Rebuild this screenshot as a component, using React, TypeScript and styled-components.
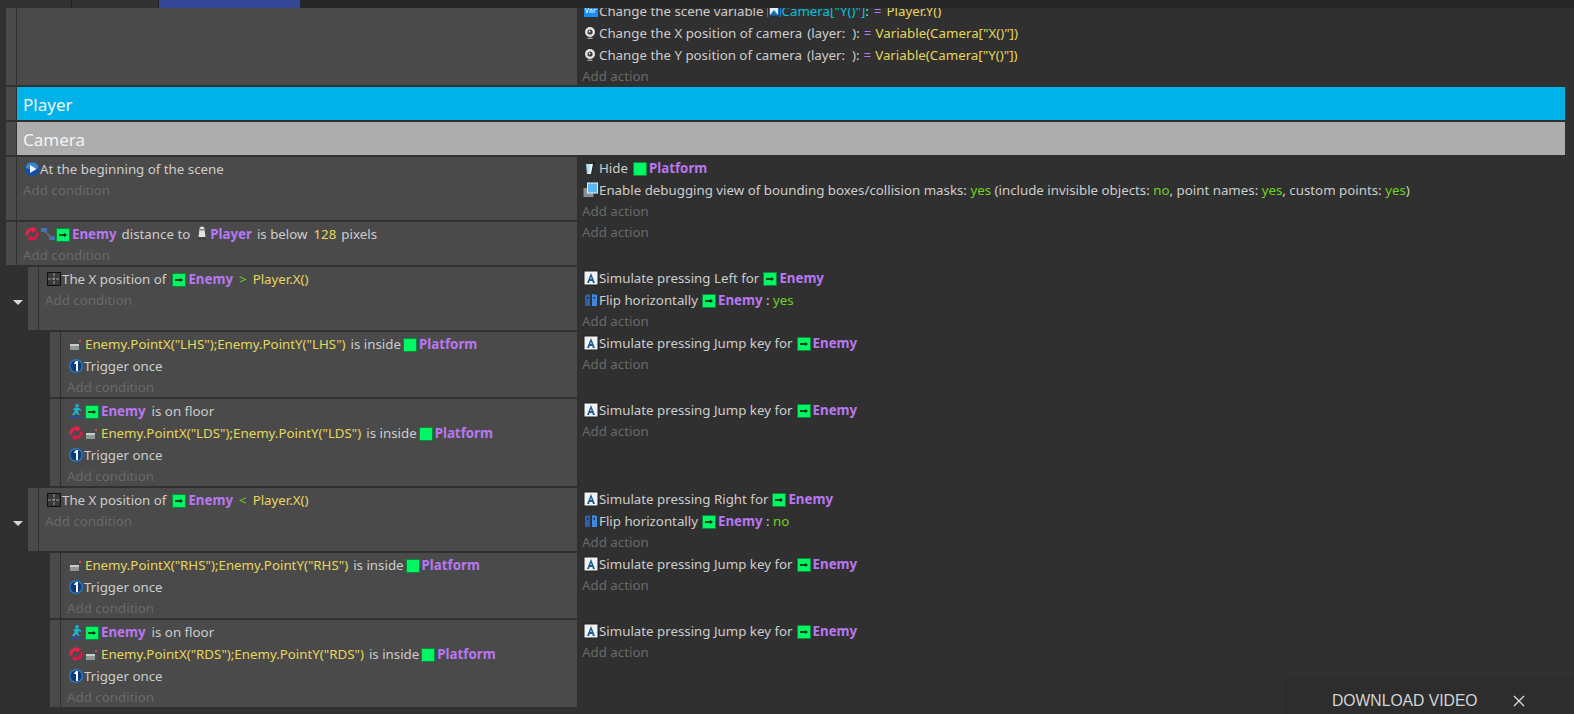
import React from "react";
import styled, { createGlobalStyle } from "styled-components";

const Global = createGlobalStyle`
  html, body { margin: 0; padding: 0; background: #303030; }
  #root { width: 1574px; height: 714px; overflow: hidden; }
`;

const Page = styled.div`
  position: relative;
  width: 1574px;
  height: 714px;
  overflow: hidden;
  background: #303030;
  font-family: "Noto Sans", "Open Sans", sans-serif;
  font-size: 13.3px;
  color: #cdcdcd;
`;

const TopBar = styled.div`
  position: relative;
  z-index: 1;
  display: flex;
  height: 8px;
  background: #262626;
`;
const TopTab = styled.div<{ $w: number }>`
  width: ${(p) => p.$w}px;
  background: #323232;
  border-right: 1px solid #232323;
  box-sizing: border-box;
`;
const ActiveTab = styled.div`
  width: 141px;
  background: #344696;
`;

const List = styled.div`
  display: flex;
  flex-direction: column;
  gap: 2px;
`;

const Line = styled.div`
  flex: 0 0 22px;
  height: 22px;
  box-sizing: border-box;
  padding: 1px 0 0 1px;
  line-height: 21px;
  white-space: pre;
`;
const AddLine = styled.div`
  flex: 0 0 21px;
  height: 21px;
  box-sizing: border-box;
  padding-top: 1px;
  line-height: 20px;
  color: #696969;
`;

const Row = styled.div<{ $indent: number; $h: number }>`
  position: relative;
  display: flex;
  height: ${(p) => p.$h}px;
  padding-left: ${(p) => 6 + p.$indent}px;
`;
const Handle = styled.div`
  flex: 0 0 10px;
  margin-right: 1px;
  background: #4a4a4a;
`;
const Conditions = styled.div<{ $indent: number }>`
  flex: 0 0 ${(p) => 560 - p.$indent}px;
  box-sizing: border-box;
  padding-left: 6px;
  background: #4a4a4a;
  overflow: hidden;
  ${Line} {
    padding-top: 2px;
  }
`;
const Actions = styled.div<{ $end?: boolean }>`
  flex: 1;
  padding-left: 5px;
  display: flex;
  flex-direction: column;
  justify-content: ${(p) => (p.$end ? "flex-end" : "flex-start")};
  margin-bottom: ${(p) => (p.$end ? "-2px" : "0")};
  min-height: 0;
  ${AddLine} {
    padding-top: 0;
  }
`;
const Obj = styled.b`
  color: #b877f2;
  font-weight: 700;
`;
const Expr = styled.span`
  color: #e6d75c;
`;
const Yes = styled.span`
  color: #6fd321;
`;
const Cyan = styled.span`
  color: #00c4dc;
`;
const Op = styled.span`
  color: #b877f2;
`;
const Gap = styled.span<{ $w?: number }>`
  display: inline-block;
  width: ${(p) => p.$w ?? 6}px;
`;

const GroupRow = styled.div`
  display: flex;
  height: 33px;
  padding: 0 9px 0 6px;
`;
const GroupBar = styled.div<{ $bg: string }>`
  flex: 1;
  padding-left: 6px;
  background: ${(p) => p.$bg};
  color: #f4f4f4;
  font-size: 17px;
  line-height: 35px;
`;

const Toggle = styled.div`
  position: absolute;
  left: 13px;
  top: 33px;
  width: 0;
  height: 0;
  border-left: 5px solid transparent;
  border-right: 5px solid transparent;
  border-top: 5px solid #d8d8d8;
`;

const Toast = styled.div`
  position: absolute;
  right: 0;
  bottom: 0;
  width: 291px;
  height: 36px;
  box-sizing: border-box;
  background: #2d2d2d;
  display: flex;
  align-items: center;
  padding: 9px 0 0 49px;
  font-family: "Liberation Sans", Arial, sans-serif;
  font-size: 15.7px;
  color: #d4d4d4;
`;
const ToastClose = styled.svg`
  width: 12px;
  height: 12px;
  margin-left: 35px;
`;

const Ico = styled.svg`
  display: inline-block;
  vertical-align: -3px;
  width: 16px;
  height: 16px;
`;

const SceneIcon = () => (
  <Ico viewBox="0 0 16 16">
    <circle cx="8" cy="8" r="7" fill="#0f4fa6" />
    <path d="M1.500 7a6.600 6.600 0 0 1 13 0c-2 1.500-11 1.500-13 0z" fill="#5aa8ea" opacity=".6" />
    <path d="M6 4l6.500 4L6 12z" fill="#f2f6fb" />
  </Ico>
);
const InvertIcon = () => (
  <Ico viewBox="0 0 16 16">
    <path d="M3 9.500A5 5 0 0 1 9.500 3.500" fill="none" stroke="#e8204c" strokeWidth="3" />
    <path d="M8 0.500l5 3-5 3.500z" fill="#e8204c" />
    <path d="M13 6.500A5 5 0 0 1 6.500 12.500" fill="none" stroke="#d81a44" strokeWidth="3" />
    <path d="M8 9l-5 3.500 5 3z" fill="#d81a44" />
  </Ico>
);
const DistanceIcon = () => (
  <Ico viewBox="0 0 16 16">
    <path d="M4 5l8 7" stroke="#8a8a8a" strokeWidth="1" />
    <rect x="1" y="2" width="6" height="4" fill="#4a70b0" />
    <rect x="9" y="10" width="6" height="4" fill="#4a70b0" />
  </Ico>
);
const GreenBox = styled.svg`
  display: inline-block;
  vertical-align: -3px;
  width: 14px;
  height: 14px;
  margin-right: 2px;
  background: #00f763;
  border: 1px solid #0b8a3e;
  box-sizing: border-box;
`;
const EnemyBox = () => (
  <GreenBox viewBox="0 0 12 12">
    <path d="M2 6h6" stroke="#0a1a10" strokeWidth="1.600" />
    <path d="M7 4l3 2-3 2z" fill="#0a1a10" />
  </GreenBox>
);
const PlatformBox = () => <GreenBox viewBox="0 0 12 12" />;
const PlayerIcon = () => (
  <Ico viewBox="0 0 16 16">
    <path d="M5.500 3a2.500 2.500 0 0 1 5 0l1 8H4.500z" fill="#e4e0dc" />
    <rect x="4.500" y="11" width="2.500" height="3.500" fill="#3c3c3c" />
    <rect x="9" y="11" width="2.500" height="3.500" fill="#3c3c3c" />
    <rect x="5.500" y="3" width="5" height="1.500" fill="#8a7a72" />
  </Ico>
);
const GridIcon = () => (
  <Ico viewBox="0 0 16 16">
    <rect x="1.500" y="1.500" width="13" height="13" fill="#3a3a3a" stroke="#111" />
    <path d="M8 2v12M2 8h12" stroke="#9a9a9a" strokeWidth="1" strokeDasharray="3 1" />
  </Ico>
);
const PointIcon = () => (
  <Ico viewBox="0 0 16 16">
    <path d="M2 8h9v6H2z" fill="#8f9894" />
    <path d="M2 8h9v2H2z" fill="#c7cdc9" />
    <rect x="11" y="4" width="2" height="2" fill="#d9484c" />
  </Ico>
);
const OnceIcon = () => (
  <Ico viewBox="0 0 16 16">
    <circle cx="8" cy="8" r="7" fill="#2a78c0" />
    <circle cx="8" cy="8" r="5.500" fill="#0f3a78" />
    <path d="M8 3h2v10H8V6H6.200V5z" fill="#f4f6fa" />
  </Ico>
);
const FloorIcon = () => (
  <Ico viewBox="0 0 16 16">
    <circle cx="9" cy="2.800" r="1.800" fill="#12bcd8" />
    <path d="M5 6l3-1.500 3 .5 2.500 2-1 1-2-1.200-.7 2.500 2.200 2.500h-2L8 10l-2 2.500-2-.7 2.500-3 .5-2.300-1.200.7z" fill="#12bcd8" />
    <rect x="1.500" y="13.500" width="13" height="1.500" fill="#1f4fa8" />
  </Ico>
);
const KeyIcon = () => (
  <Ico viewBox="0 0 16 16">
    <rect x="1" y="1" width="14" height="14" fill="#f0f2f4" stroke="#222" />
    <path d="M8 3l4 10h-2l-.7-2H6.700L6 13H4zM7.300 9h1.400L8 6.800z" fill="#1d5a94" />
  </Ico>
);
const FlipIcon = () => (
  <Ico viewBox="0 0 16 16">
    <path d="M2 3l5-1v12H2z" fill="#2c5fa8" />
    <path d="M9 2l5 1v11H9z" fill="#3f88e0" />
    <rect x="4" y="5" width="1.500" height="1.500" fill="#10203c" />
    <rect x="10.500" y="5" width="1.500" height="1.500" fill="#10203c" />
  </Ico>
);
const HideIcon = () => (
  <Ico viewBox="0 0 16 16">
    <path d="M3 4h8l-2.500 10H4z" fill="#a9def2" />
    <path d="M7 4h4l-2.500 10H6z" fill="#e8f6fb" />
    <path d="M10.500 1.500h1.500l-3 12.500H8z" fill="#151515" />
  </Ico>
);
const DebugIcon = () => (
  <Ico viewBox="0 0 16 16">
    <rect x="0.500" y="6" width="10" height="9" fill="#8d8d8d" />
    <rect x="4.500" y="1" width="10" height="10" fill="#5cb6f2" stroke="#dff2ff" />
  </Ico>
);
const CameraIcon = () => (
  <Ico viewBox="0 0 16 16">
    <circle cx="7" cy="7" r="5" fill="#e6e6e6" />
    <circle cx="7" cy="7" r="2.600" fill="#3a4048" />
    <circle cx="6.500" cy="6.500" r=".9" fill="#dfe6ee" />
    <path d="M4.500 12.500h5V14h-5z" fill="#9a9a9a" />
  </Ico>
);
const VarIcon = () => (
  <Ico viewBox="0 0 16 16">
    <rect x="1" y="2" width="14" height="12" fill="#1c8cf0" />
    <path d="M2.500 5l1.500 5 1.500-5M7 10V6.500h2V10M11 10V6.500h2.500" stroke="#dcefff" strokeWidth="1" fill="none" />
  </Ico>
);
const ObjVarIcon = () => (
  <Ico viewBox="0 0 16 16">
    <rect x="3.500" y="4" width="9" height="8" fill="#e4eef8" stroke="#1b6fb8" />
    <path d="M4 12l4-5 4 5z" fill="#1b6fb8" />
    <path d="M2.500 2.500H1.500v11h1M13.500 2.500h1v11h-1" stroke="#1a84c8" fill="none" />
  </Ico>
);

const AddCond = () => <AddLine>Add condition</AddLine>;
const AddAct = () => <AddLine>Add action</AddLine>;
const Enemy = () => (
  <>
    <EnemyBox />
    <Obj>Enemy</Obj>
  </>
);
const Platform = () => (
  <>
    <PlatformBox />
    <Obj>Platform</Obj>
  </>
);

const Sim = ({ k }: { k: string }) => (
  <Line>
    <KeyIcon />
    {`Simulate pressing ${k} for`}
    <Gap $w={4} />
    <Enemy />
  </Line>
);

type Ev = { indent: number; h: number; toggle?: boolean; cond: React.ReactNode; act: React.ReactNode };

const Inside = ({ code, invert }: { code: string; invert?: boolean }) => (
  <Line>
    {invert && <InvertIcon />}
    <PointIcon />
    <Gap $w={1} />
    <Expr>{`Enemy.PointX("${code}");Enemy.PointY("${code}")`}</Expr>
    <Gap $w={5} />
    is inside
    <Gap $w={2} />
    <Platform />
  </Line>
);
const Once = () => (
  <Line>
    <OnceIcon />
    Trigger once
  </Line>
);
const Floor = () => (
  <Line>
    <FloorIcon />
    <Gap $w={1} />
    <Enemy />
    <Gap />
    is on floor
  </Line>
);

const Position = ({ op }: { op: string }) => (
  <Line>
    <GridIcon />
    The X position of
    <Gap />
    <Enemy />
    <Gap />
    <Yes>{op}</Yes>
    <Gap />
    <Expr>Player.X()</Expr>
  </Line>
);
const Flip = ({ v }: { v: string }) => (
  <Line>
    <FlipIcon />
    Flip horizontally
    <Gap $w={4} />
    <Enemy />
    {" : "}
    <Yes>{v}</Yes>
  </Line>
);
const CameraLine = ({ axis }: { axis: string }) => (
  <Line>
    <CameraIcon />
    {`Change the ${axis} position of camera`}
    <Gap $w={5} />
    {"(layer:  ):"}
    <Gap $w={4} />
    <Op>=</Op>
    <Gap $w={4} />
    <Expr>{`Variable(Camera["${axis}()"])`}</Expr>
  </Line>
);

const jumpActs = (
  <>
    <Sim k="Jump key" />
    <AddAct />
  </>
);

const events: Ev[] = [
  {
    indent: 0,
    h: 63,
    cond: (
      <>
        <Line>
          <SceneIcon />
          At the beginning of the scene
        </Line>
        <AddCond />
      </>
    ),
    act: (
      <>
        <Line>
          <HideIcon />
          Hide
          <Gap $w={5} />
          <Platform />
        </Line>
        <Line>
          <DebugIcon />
          {"Enable debugging view of bounding boxes/collision masks: "}
          <Yes>yes</Yes>
          {" (include invisible objects: "}
          <Yes>no</Yes>
          {", point names: "}
          <Yes>yes</Yes>
          {", custom points: "}
          <Yes>yes</Yes>
          {")"}
        </Line>
        <AddAct />
      </>
    ),
  },
  {
    indent: 0,
    h: 43,
    cond: (
      <>
        <Line>
          <InvertIcon />
          <DistanceIcon />
          <Enemy />
          <Gap $w={5} />
          distance to
          <Gap $w={4} />
          <PlayerIcon />
          <Obj>Player</Obj>
          <Gap $w={5} />
          is below
          <Gap />
          <Expr>128</Expr>
          <Gap $w={5} />
          pixels
        </Line>
        <AddCond />
      </>
    ),
    act: <AddAct />,
  },
  {
    indent: 22,
    h: 63,
    toggle: true,
    cond: (
      <>
        <Position op=">" />
        <AddCond />
      </>
    ),
    act: (
      <>
        <Sim k="Left" />
        <Flip v="yes" />
        <AddAct />
      </>
    ),
  },
  {
    indent: 44,
    h: 65,
    cond: (
      <>
        <Inside code="LHS" />
        <Once />
        <AddCond />
      </>
    ),
    act: jumpActs,
  },
  {
    indent: 44,
    h: 87,
    cond: (
      <>
        <Floor />
        <Inside code="LDS" invert />
        <Once />
        <AddCond />
      </>
    ),
    act: jumpActs,
  },
  {
    indent: 22,
    h: 63,
    toggle: true,
    cond: (
      <>
        <Position op="<" />
        <AddCond />
      </>
    ),
    act: (
      <>
        <Sim k="Right" />
        <Flip v="no" />
        <AddAct />
      </>
    ),
  },
  {
    indent: 44,
    h: 65,
    cond: (
      <>
        <Inside code="RHS" />
        <Once />
        <AddCond />
      </>
    ),
    act: jumpActs,
  },
  {
    indent: 44,
    h: 87,
    cond: (
      <>
        <Floor />
        <Inside code="RDS" invert />
        <Once />
        <AddCond />
      </>
    ),
    act: jumpActs,
  },
];

export default function App() {
  return (
    <Page>
      <Global />
      <TopBar>
        <TopTab $w={72} />
        <TopTab $w={87} />
        <ActiveTab />
      </TopBar>
      <List>
        <Row $indent={0} $h={77}>
          <Handle />
          <Conditions $indent={0} />
          <Actions $end>
            <Line>
              <VarIcon />
              Change the scene variable
              <Gap $w={2} />
              <ObjVarIcon />
              <Cyan>{'Camera["Y()"]'}</Cyan>
              :
              <Gap $w={5} />
              <Op>=</Op>
              <Gap $w={5} />
              <Expr>Player.Y()</Expr>
            </Line>
            <CameraLine axis="X" />
            <CameraLine axis="Y" />
            <AddAct />
          </Actions>
        </Row>
        <GroupRow>
          <Handle />
          <GroupBar $bg="#00b2e8">Player</GroupBar>
        </GroupRow>
        <GroupRow>
          <Handle />
          <GroupBar $bg="#adadad">Camera</GroupBar>
        </GroupRow>
        {events.map((e, i) => (
          <Row key={i} $indent={e.indent} $h={e.h}>
            {e.toggle && <Toggle />}
            <Handle />
            <Conditions $indent={e.indent}>{e.cond}</Conditions>
            <Actions>{e.act}</Actions>
          </Row>
        ))}
      </List>
      <Toast>
        DOWNLOAD VIDEO
        <ToastClose viewBox="0 0 12 12">
          <path d="M1 1l10 10M11 1L1 11" stroke="#d8d8d8" strokeWidth="1.400" />
        </ToastClose>
      </Toast>
    </Page>
  );
}
